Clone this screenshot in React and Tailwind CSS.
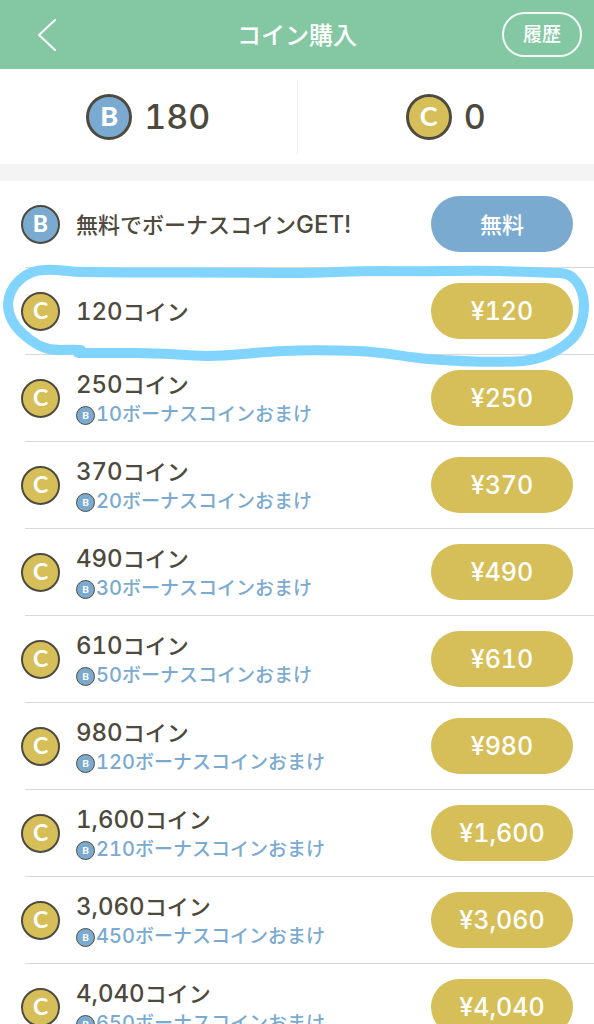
import clsx from 'clsx';

const packs = [
  { coins: '120', price: '120', highlighted: true },
  { coins: '250', price: '250', bonus: 10 },
  { coins: '370', price: '370', bonus: 20 },
  { coins: '490', price: '490', bonus: 30 },
  { coins: '610', price: '610', bonus: 50 },
  { coins: '980', price: '980', bonus: 120 },
  { coins: '1,600', price: '1,600', bonus: 210 },
  { coins: '3,060', price: '3,060', bonus: 450 },
  { coins: '4,040', price: '4,040', bonus: 650 },
];

const coinSizes = {
  sm: 'size-[19px] border pb-px text-[10px]',
  md: 'size-[39px] border-2 pb-px text-[23px]',
  lg: 'size-[46px] border-3 pb-0.5 text-[27px]',
};

function Coin({ type, size = 'md' }) {
  return (
    <span
      className={clsx(
        "flex shrink-0 items-center justify-center rounded-full border-[#4d4a3f] font-['Lato',sans-serif] leading-none text-white",
        type === 'B' ? 'bg-[#7baad0] font-black' : 'bg-[#d6bf59] font-bold',
        coinSizes[size]
      )}
    >
      {type}
    </span>
  );
}

function Balance({ type, amount }) {
  return (
    <div className="flex flex-1 items-center justify-center gap-3">
      <Coin type={type} size="lg" />
      <span className="text-[34px] leading-none font-medium tabular-nums">{amount}</span>
    </div>
  );
}

function Row({ type, action, children, overlay }) {
  return (
    <li className="relative flex h-[87px] items-center pr-[21px] pb-px pl-[21px]">
      <Coin type={type} />
      <div className="ml-4 min-w-0 flex-1 pt-0.5">{children}</div>
      <button
        type="button"
        className={clsx(
          'h-14 w-[142px] shrink-0 rounded-full pt-0.5 font-medium text-white tabular-nums',
          type === 'B' ? 'bg-[#7baad0] text-[22px]' : 'bg-[#d6bf59] text-[25px]'
        )}
      >
        {action}
      </button>
      <div className="absolute right-0 bottom-0 left-[25px] border-b border-[#d8d8d8]" />
      {overlay}
    </li>
  );
}

// Hand-drawn marker ring around a row
function MarkerRing() {
  return (
    <svg
      className="pointer-events-none absolute -top-2 left-0 z-10 h-[110px] w-full"
      viewBox="0 0 594 110"
      preserveAspectRatio="none"
      fill="none"
      stroke="#80d4fe"
      strokeWidth="10"
      strokeLinecap="round"
      strokeLinejoin="round"
      aria-hidden="true"
    >
      <path d="M81 90C70 89 58 91 49 89C39 87 31 81 23 74C13 65 8 56 8 44C9 25 26 10 45 10C58 9 68 12 84 12C150 13 225 12 294 13C325 13 350 11 384 11C425 12 462 10 500 11C525 12 545 13 560 13C573 13 583 26 584 44C584 60 580 71 572 79C560 90 543 99 523 101C493 103 455 101 428 99C405 97 385 92 357 91C325 90 305 90 284 91C255 92 235 96 207 96C180 95 160 93 138 93C115 93 95 93 78 93" />
    </svg>
  );
}

export default function App() {
  return (
    <div className="min-h-screen bg-white font-['Inter','Noto_Sans_CJK_JP',sans-serif] text-[#4d493c]">
      <header className="grid h-[69px] grid-cols-[1fr_auto_1fr] items-center bg-[#84c8a3] px-3 text-white">
        <button type="button" aria-label="戻る" className="ml-5 flex size-8 items-center justify-center">
          <svg className="h-8 w-5" viewBox="0 0 20 32" fill="none" stroke="currentColor" strokeWidth="2">
            <path d="M17 1L1 16L17 31" strokeLinecap="round" strokeLinejoin="round" />
          </svg>
        </button>
        <h1 className="pt-0.5 text-[24px] font-medium">コイン購入</h1>
        <button
          type="button"
          className="h-[45px] w-20 justify-self-end rounded-full border-2 border-white/90 pt-0.5 text-[19px] font-medium"
        >
          履歴
        </button>
      </header>

      <section className="flex h-[95px] items-center">
        <Balance type="B" amount="180" />
        <div className="h-[74px] w-px bg-[#f0f0f0]" />
        <Balance type="C" amount="0" />
      </section>

      <div className="h-[17px] bg-[#f4f4f4]" />

      <ul>
        <Row type="B" action="無料">
          <p className="text-[22px] leading-8 font-medium">
            無料でボーナスコイン<span className="text-2xl leading-8">GET!</span>
          </p>
        </Row>
        {packs.map((pack) => (
          <Row
            key={pack.coins}
            type="C"
            action={`¥${pack.price}`}
            overlay={pack.highlighted && <MarkerRing />}
          >
            <p className="text-[22px] leading-8 font-medium">
              <span className="text-2xl leading-8 tabular-nums">{pack.coins}</span>コイン
            </p>
            {pack.bonus && (
              <p className="flex h-7 items-center text-[19px] font-medium text-[#7baad0]">
                <Coin type="B" size="sm" />
                <span className="ml-px">
                  <span className="text-xl tabular-nums">{pack.bonus}</span>ボーナスコインおまけ
                </span>
              </p>
            )}
          </Row>
        ))}
      </ul>
    </div>
  );
}
